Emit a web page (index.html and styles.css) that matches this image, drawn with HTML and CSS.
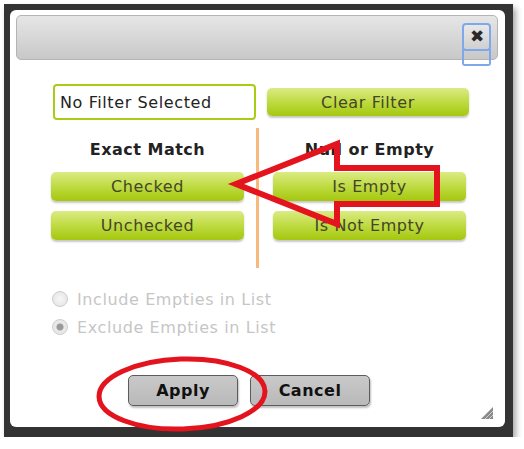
FILE: index.html
```html
<!DOCTYPE html>
<html>

<head>
    <link rel="stylesheet" href="styles.css">
</head>

<body>
    <div class="frame">
        <div class="dialog">
            <div class="titlebar">
                <button class="close_btn">&#x2716;</button>
            </div>

            <div class="filter_row">
                <input class="filter_input" type="text" value="No Filter Selected">
                <button class="green_btn clear_btn">Clear Filter</button>
            </div>

            <div class="columns">
                <div class="col">
                    <div class="col_head">Exact Match</div>
                    <button class="green_btn">Checked</button>
                    <button class="green_btn">Unchecked</button>
                </div>
                <div class="divider"></div>
                <div class="col">
                    <div class="col_head">Null or Empty</div>
                    <button class="green_btn">Is Empty</button>
                    <button class="green_btn">Is Not Empty</button>
                </div>
            </div>

            <div class="radios">
                <label class="radio_row"><input type="radio" name="empties" disabled> Include Empties in List</label>
                <label class="radio_row"><input type="radio" name="empties" checked disabled> Exclude Empties in List</label>
            </div>

            <div class="actions">
                <button class="gray_btn apply_btn">Apply</button>
                <button class="gray_btn cancel_btn">Cancel</button>
            </div>

            <svg class="grip" width="12" height="12" viewBox="0 0 12 12">
                <polygon points="12,0 12,12 0,12" fill="#8a8a8a" />
                <line x1="4" y1="12" x2="12" y2="4" stroke="#d0d0d0" stroke-width="1" />
                <line x1="8" y1="12" x2="12" y2="8" stroke="#d0d0d0" stroke-width="1" />
            </svg>
        </div>
    </div>

    <!-- red annotation marks drawn over the screenshot -->
    <svg class="marks" width="524" height="449" viewBox="0 0 524 449">
        <polygon points="236,184 337,144 337,168 437,168 437,204 337,204 337,224"
            fill="none" stroke="#e4141e" stroke-width="6" stroke-linejoin="miter" />
        <ellipse cx="182" cy="394" rx="83" ry="35" fill="none" stroke="#e4141e" stroke-width="5"
            transform="rotate(-2 182 394)" />
    </svg>
</body>

</html>
```

FILE: styles.css
```css
body {
    margin: 0;
    background: #fff;
    font-family: 'DejaVu Sans', Verdana, sans-serif;
}

.frame {
    box-sizing: border-box;
    width: 509px;
    height: 433px;
    margin: 4px 0 0 4px;
    padding: 6px 8px 10px 6px;
    background: #333;
    box-shadow: 3px 4px 6px rgba(0, 0, 0, 0.35);
}

.dialog {
    position: relative;
    height: 100%;
    background: #fff;
    border-radius: 6px;
    overflow: hidden;
    padding-top: 5px;
    box-sizing: border-box;
}

.titlebar {
    box-sizing: border-box;
    height: 45px;
    margin: 0 7px 0 6px;
    padding-right: 6px;
    display: flex;
    justify-content: flex-end;
    align-items: center;
    border: 1px solid #b4b4b4;
    border-radius: 5px;
    background: linear-gradient(#e6e6e6, #c8c8c8);
}

.close_btn {
    position: relative;
    width: 29px;
    height: 28px;
    padding: 0;
    margin-bottom: 2px;
    border: 2px solid #7fa8ec;
    border-radius: 4px;
    background: linear-gradient(#e8e8e8, #d0d0d0);
    color: #2a2a2a;
    font-size: 17px;
    line-height: 22px;
}

.close_btn::after {
    content: "";
    position: absolute;
    left: -2px;
    top: 24px;
    width: 25px;
    height: 15px;
    border: 2px solid #7fa8ec;
    border-top: none;
    border-radius: 0 0 3px 3px;
}

.filter_row {
    display: flex;
    align-items: center;
    margin-top: 24px;
    padding-left: 43px;
}

.filter_input {
    box-sizing: border-box;
    width: 203px;
    height: 36px;
    margin: 0;
    padding: 0 5px;
    border: 2px solid #a9cc17;
    border-radius: 4px;
    font-family: 'DejaVu Sans', Verdana, sans-serif;
    font-size: 16px;
    letter-spacing: 0.6px;
    color: #222;
}

.green_btn {
    display: block;
    box-sizing: border-box;
    width: 193px;
    height: 29px;
    padding: 0;
    border: none;
    border-radius: 5px;
    background: linear-gradient(#dbeb83, #bcd93c 55%, #a5c70e);
    box-shadow: 0 2px 2px rgba(0, 0, 0, 0.22);
    font-family: 'DejaVu Sans', Verdana, sans-serif;
    font-size: 16px;
    letter-spacing: 0.6px;
    color: #45452a;
}

.clear_btn {
    width: 202px;
    height: 28px;
    margin-left: 11px;
}

.columns {
    display: flex;
    margin-top: 8px;
    padding-left: 41px;
}

.col {
    display: flex;
    flex-direction: column;
    gap: 10px;
    width: 193px;
}

.col_head {
    height: 34px;
    line-height: 44px;
    text-align: center;
    font-weight: bold;
    font-size: 16px;
    letter-spacing: 0.5px;
    color: #222;
}

.divider {
    width: 3px;
    height: 140px;
    margin: 0 14px 0 12px;
    background: #f8b97c;
}

.radios {
    margin-top: 17px;
    padding-left: 42px;
}

.radio_row {
    display: flex;
    align-items: center;
    gap: 9px;
    height: 28px;
    font-size: 16px;
    letter-spacing: 0.6px;
    color: #c6c6c6;
}

.radio_row input {
    appearance: none;
    width: 16px;
    height: 16px;
    margin: 0;
    border: 1px solid #cdcdcd;
    border-radius: 50%;
    background: radial-gradient(#f6f6f6, #e2e2e2);
}

.radio_row input:checked {
    background: radial-gradient(circle, #9a9a9a 0 3px, #e8e8e8 4px);
}

.actions {
    display: flex;
    gap: 12px;
    margin-top: 34px;
    padding-left: 118px;
}

.gray_btn {
    height: 31px;
    padding: 0;
    border: 1px solid #5c5c5c;
    border-radius: 5px;
    background: linear-gradient(#c9c9c9, #b9b9b9);
    box-shadow: 1px 2px 2px rgba(0, 0, 0, 0.25);
    font-family: 'DejaVu Sans', Verdana, sans-serif;
    font-weight: bold;
    font-size: 16px;
    letter-spacing: 0.5px;
    color: #111;
}

.apply_btn {
    width: 110px;
}

.cancel_btn {
    width: 120px;
}

.grip {
    position: absolute;
    right: 12px;
    bottom: 8px;
}

.marks {
    position: absolute;
    left: 0;
    top: 0;
    pointer-events: none;
}
```
